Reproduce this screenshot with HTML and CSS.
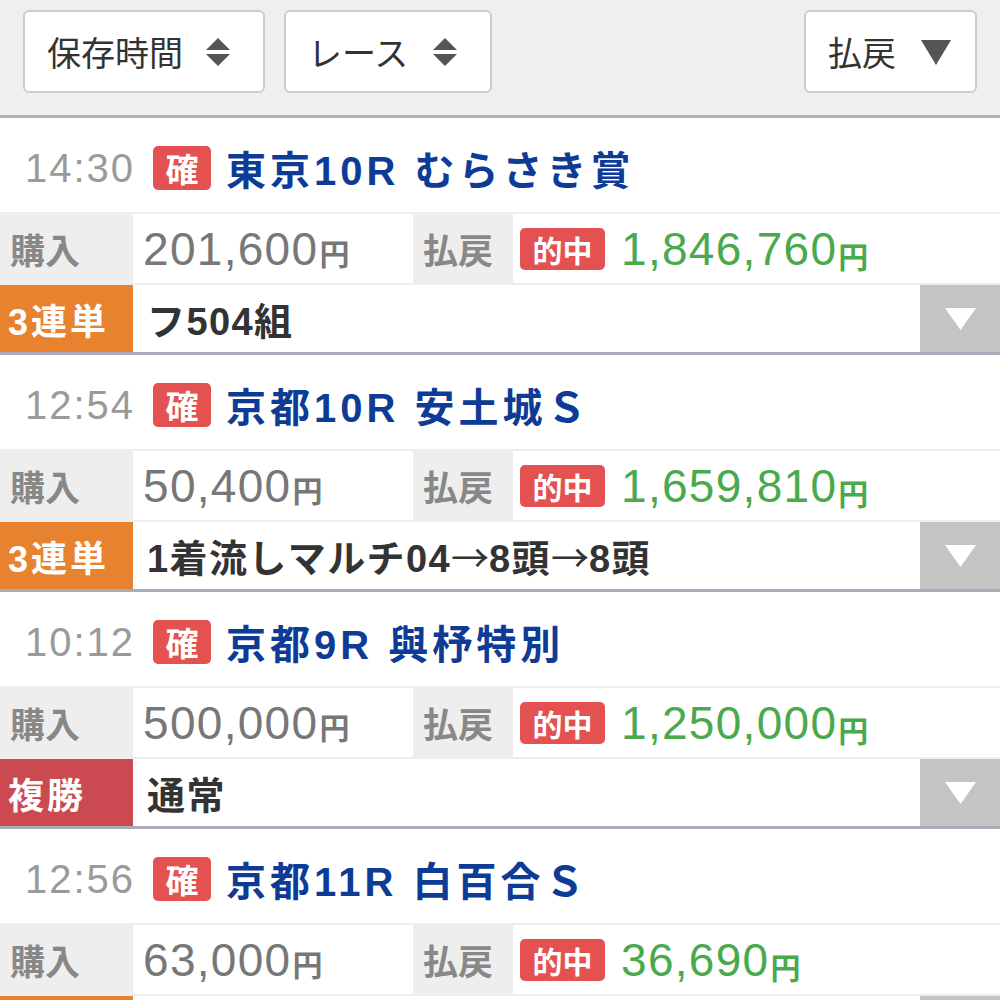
FILE: index.html
```html
<!DOCTYPE html>
<html lang="ja">
<head>
<meta charset="utf-8">
<title>払戻一覧</title>
<link rel="stylesheet" href="styles.css">
</head>
<body>
<header class="toolbar">
  <button class="sort sort-time">保存時間
    <svg class="updown" viewBox="0 0 26 30" width="26" height="30"><path d="M1 13 L13 1 L25 13 Z M1 17 L13 29 L25 17 Z"/></svg>
  </button>
  <button class="sort sort-race">レース
    <svg class="updown" viewBox="0 0 26 30" width="26" height="30"><path d="M1 13 L13 1 L25 13 Z M1 17 L13 29 L25 17 Z"/></svg>
  </button>
  <button class="sort sort-pay">払戻
    <svg class="down" viewBox="0 0 30 25" width="30" height="25"><path d="M0 0 L30 0 L15 25 Z"/></svg>
  </button>
</header>

<main class="list">
  <section class="card">
    <div class="head"><span class="time">14:30</span><span class="kaku">確</span><span class="race">東京10R むらさき賞</span></div>
    <div class="info">
      <div class="lbl">購入</div>
      <div class="val buy">201,600<small>円</small></div>
      <div class="lbl">払戻</div>
      <div class="val"><span class="hit">的中</span><span class="pay">1,846,760<small>円</small></span></div>
    </div>
    <div class="bet">
      <div class="type orange">3連単</div>
      <div class="desc">フ504組</div>
      <div class="open"><svg viewBox="0 0 31 22" width="31" height="22"><path d="M0 0 L31 0 L15.5 22 Z"/></svg></div>
    </div>
  </section>

  <section class="card">
    <div class="head"><span class="time">12:54</span><span class="kaku">確</span><span class="race">京都10R 安土城Ｓ</span></div>
    <div class="info">
      <div class="lbl">購入</div>
      <div class="val buy">50,400<small>円</small></div>
      <div class="lbl">払戻</div>
      <div class="val"><span class="hit">的中</span><span class="pay">1,659,810<small>円</small></span></div>
    </div>
    <div class="bet">
      <div class="type orange">3連単</div>
      <div class="desc">1着流しマルチ04<span class="arr">→</span>8頭<span class="arr">→</span>8頭</div>
      <div class="open"><svg viewBox="0 0 31 22" width="31" height="22"><path d="M0 0 L31 0 L15.5 22 Z"/></svg></div>
    </div>
  </section>

  <section class="card">
    <div class="head"><span class="time">10:12</span><span class="kaku">確</span><span class="race">京都9R 與杼特別</span></div>
    <div class="info">
      <div class="lbl">購入</div>
      <div class="val buy">500,000<small>円</small></div>
      <div class="lbl">払戻</div>
      <div class="val"><span class="hit">的中</span><span class="pay">1,250,000<small>円</small></span></div>
    </div>
    <div class="bet">
      <div class="type red">複勝</div>
      <div class="desc">通常</div>
      <div class="open"><svg viewBox="0 0 31 22" width="31" height="22"><path d="M0 0 L31 0 L15.5 22 Z"/></svg></div>
    </div>
  </section>

  <section class="card">
    <div class="head"><span class="time">12:56</span><span class="kaku">確</span><span class="race">京都11R 白百合Ｓ</span></div>
    <div class="info">
      <div class="lbl">購入</div>
      <div class="val buy">63,000<small>円</small></div>
      <div class="lbl">払戻</div>
      <div class="val"><span class="hit">的中</span><span class="pay">36,690<small>円</small></span></div>
    </div>
    <div class="bet">
      <div class="type orange">3連単</div>
      <div class="desc">通常</div>
      <div class="open"><svg viewBox="0 0 31 22" width="31" height="22"><path d="M0 0 L31 0 L15.5 22 Z"/></svg></div>
    </div>
  </section>
</main>
</body>
</html>
```

FILE: styles.css
```css
* { box-sizing: border-box; }

html, body {
  margin: 0;
  padding: 0;
  background: #ffffff;
  font-family: "Liberation Sans", "Noto Sans CJK JP", sans-serif;
}

.toolbar {
  display: flex;
  align-items: flex-start;
  gap: 19px;
  height: 118px;
  padding: 10px 23px 0;
  background: #efefef;
  border-bottom: 3px solid #aab0c0;
}

.sort {
  display: flex;
  align-items: center;
  justify-content: space-between;
  height: 83px;
  padding: 0 30px 0 22px;
  background: #ffffff;
  border: 2px solid #cccccc;
  border-radius: 6px;
  font-family: "Noto Sans CJK JP", sans-serif;
  font-size: 34px;
  font-weight: 400;
  color: #333333;
}

.sort-time { width: 242px; padding-right: 32px; }
.sort-race { width: 208px; padding-right: 32px; }
.sort-pay { width: 173px; margin-left: auto; padding-right: 24px; }

.updown, .down { fill: #555555; }
.sort .down { margin-top: 2px; }

.card {
  border-bottom: 3px solid #a7adbd;
}

.head {
  display: flex;
  align-items: center;
  height: 94px;
  padding: 6px 0 0 25px;
}

.time {
  font-size: 40px;
  color: #9a9a9a;
  letter-spacing: 2px;
}

.kaku {
  display: flex;
  align-items: center;
  justify-content: center;
  width: 58px;
  height: 44px;
  margin: 0 15px 0 18px;
  background: #e35150;
  border-radius: 5px;
  color: #ffffff;
  font-family: "Noto Sans CJK JP", sans-serif;
  font-weight: 700;
  font-size: 33px;
}

.race {
  font-size: 40px;
  font-weight: 700;
  color: #0d3b95;
  letter-spacing: 4px;
  white-space: nowrap;
}

.info {
  display: grid;
  grid-template-columns: 133px 280px 100px 1fr;
  height: 73px;
  padding: 2px 0;
  background: #eeeeee;
}

.lbl {
  display: flex;
  align-items: center;
  padding-left: 10px;
  font-family: "Noto Sans CJK JP", sans-serif;
  font-size: 35px;
  font-weight: 700;
  color: #888888;
}

.val {
  display: flex;
  align-items: center;
  padding-left: 10px;
  background: #ffffff;
  font-size: 46px;
  letter-spacing: 1.3px;
  color: #777777;
  white-space: nowrap;
}

.val small {
  font-family: "Noto Sans CJK JP", sans-serif;
  font-size: 30px;
  font-weight: 700;
  letter-spacing: 0;
  margin-left: 1px;
  position: relative;
  top: 3px;
}

.val .hit {
  display: flex;
  align-items: center;
  justify-content: center;
  width: 85px;
  height: 42px;
  margin: 0 16px 0 -3px;
  background: #e35150;
  border-radius: 5px;
  color: #ffffff;
  font-family: "Noto Sans CJK JP", sans-serif;
  font-size: 30px;
  font-weight: 700;
  letter-spacing: 0;
}

.val .pay {
  color: #4aa84d;
}

.bet {
  display: grid;
  grid-template-columns: 133px 1fr 80px;
  height: 67px;
}

.type {
  display: flex;
  align-items: center;
  padding-left: 8px;
  color: #ffffff;
  font-family: "Liberation Sans", "Noto Sans CJK JP", sans-serif;
  font-size: 36px;
  font-weight: 700;
  letter-spacing: 3px;
}

.type.orange { background: #e7822f; }
.type.red { background: #cb4a51; }

.desc {
  display: flex;
  align-items: center;
  padding-left: 14px;
  font-size: 38px;
  font-weight: 700;
  letter-spacing: 1.4px;
  color: #333333;
  white-space: nowrap;
}

.desc .arr {
  font-family: "Noto Sans CJK JP", sans-serif;
  font-weight: 400;
  letter-spacing: 0;
}

.open {
  display: flex;
  align-items: center;
  justify-content: center;
  background: #c4c4c4;
}

.open svg { fill: #ffffff; }
```
